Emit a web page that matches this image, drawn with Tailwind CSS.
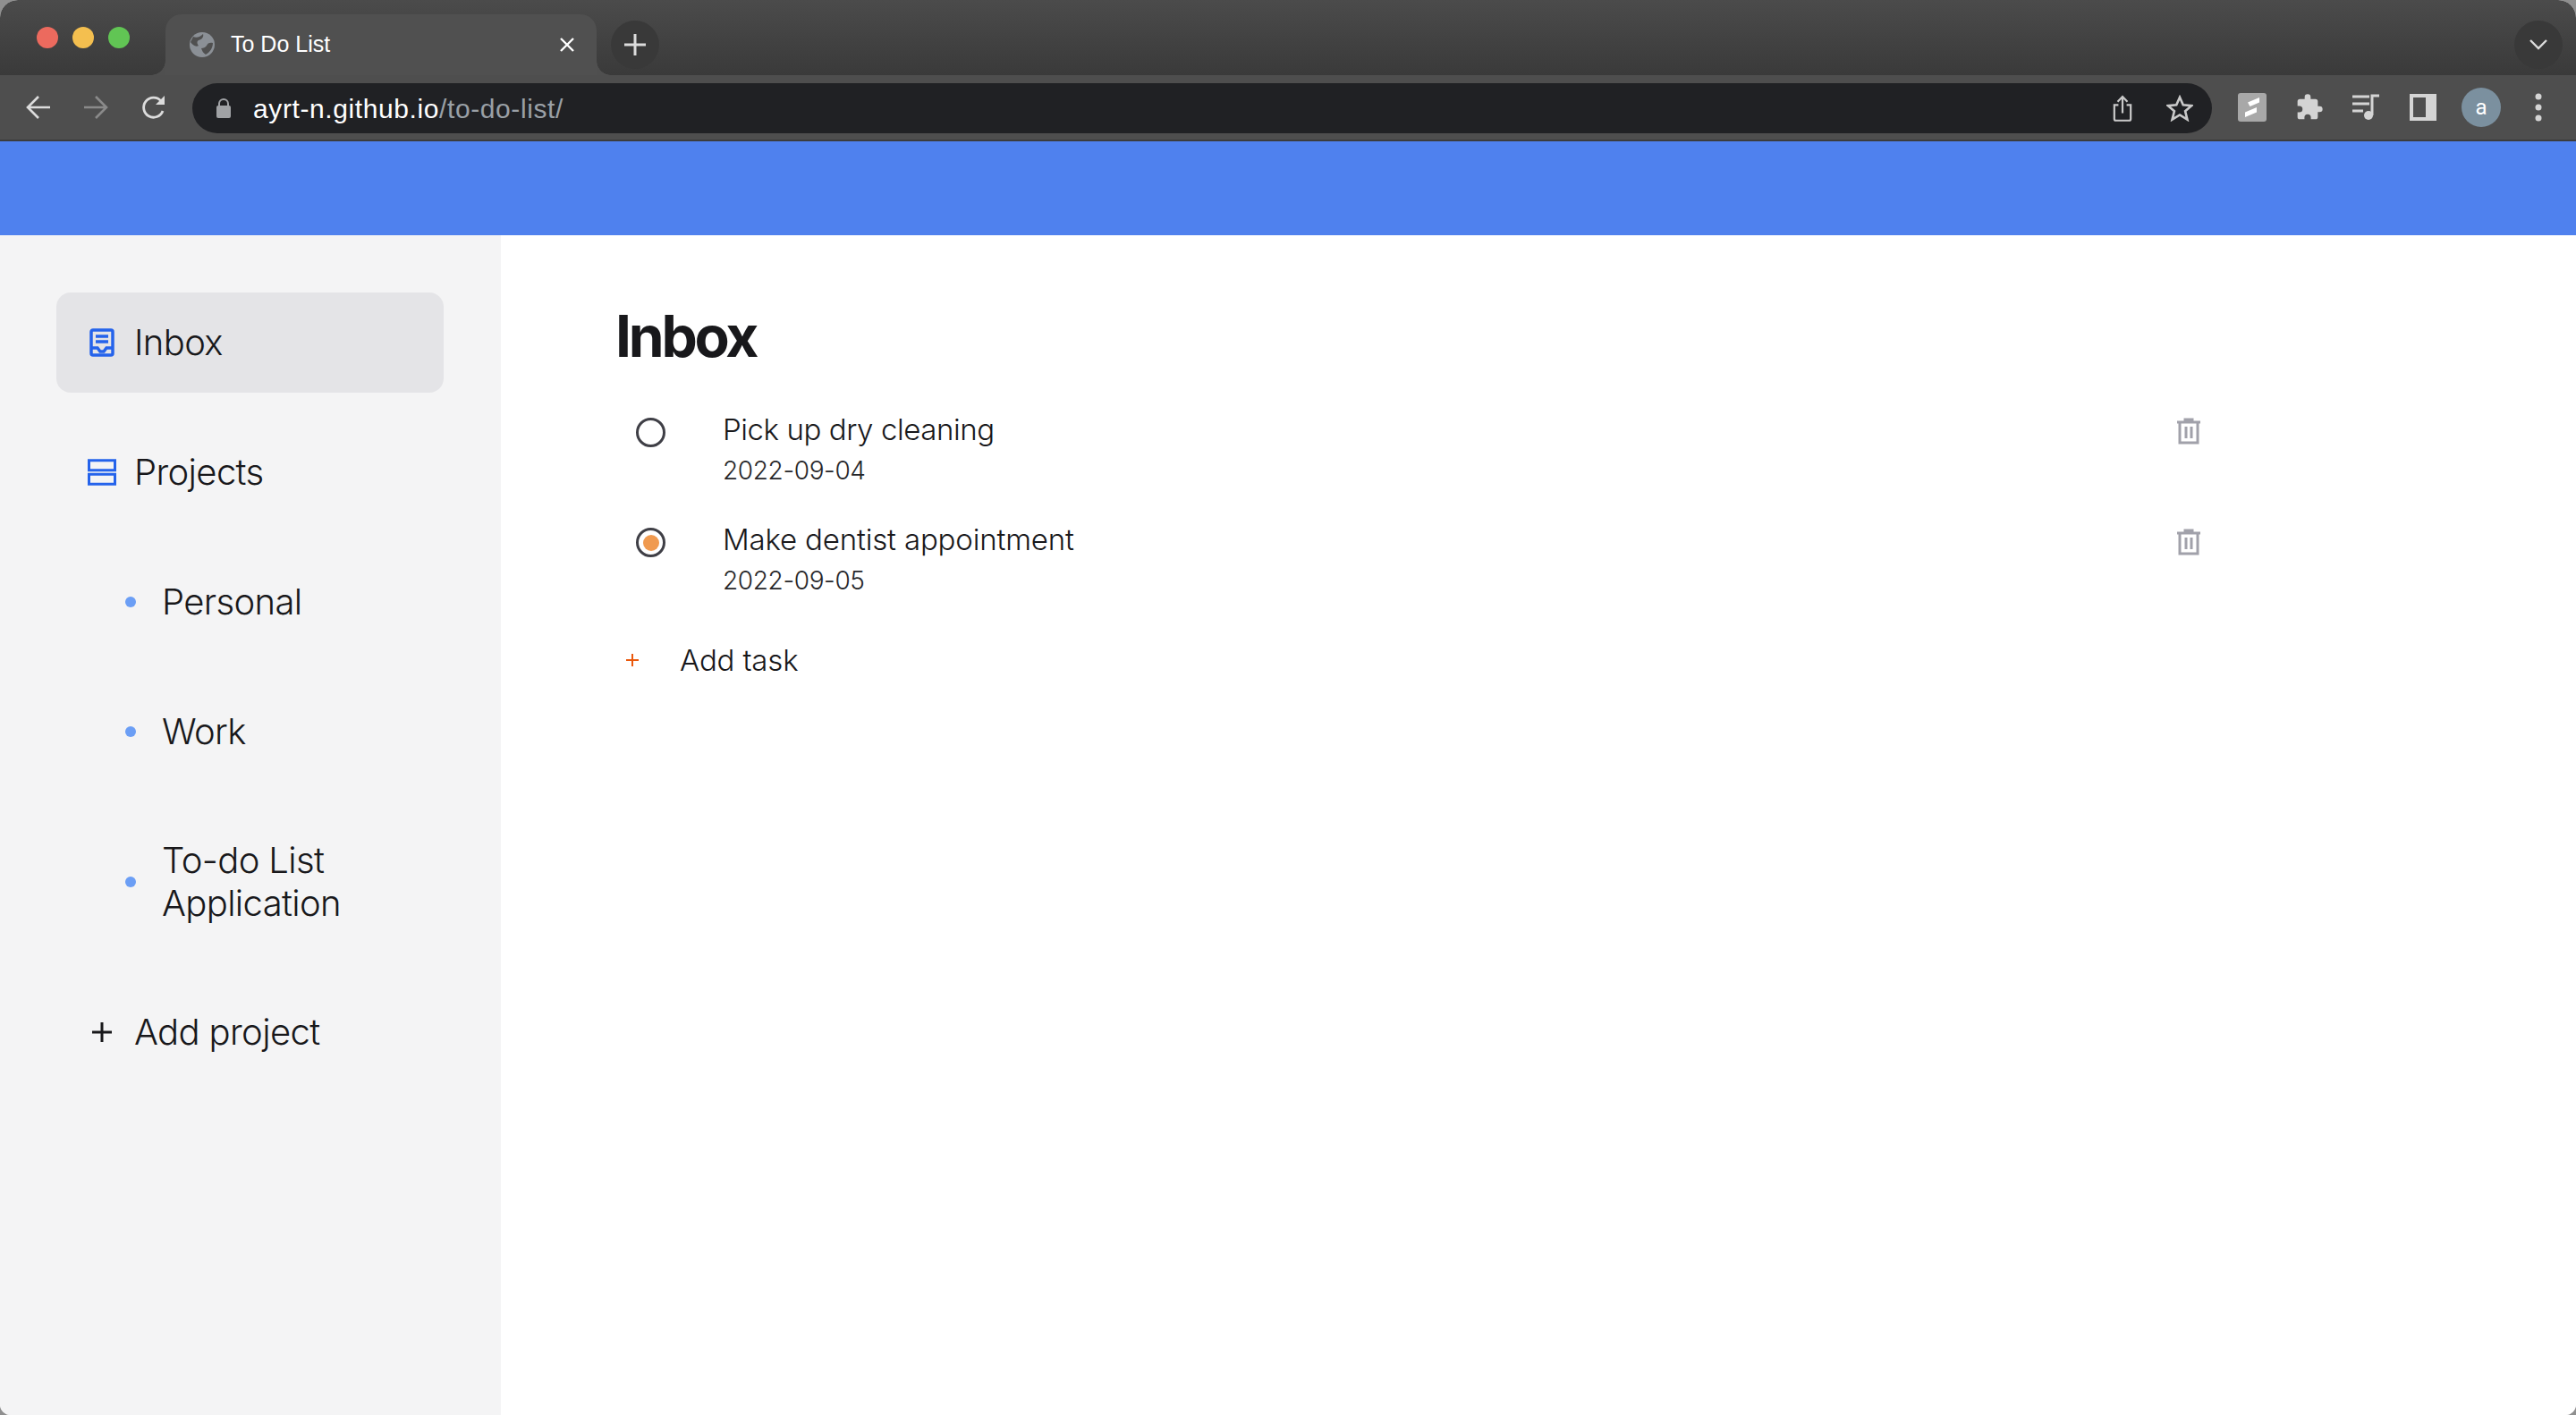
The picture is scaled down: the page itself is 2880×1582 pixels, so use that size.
<!DOCTYPE html>
<html lang="en">
  <head>
    <title>To Do List</title>
    <script src="https://cdn.jsdelivr.net/npm/@tailwindcss/browser@4"></script>
  </head>

  <body class="bg-[#8f8f8f]">
    <div class="h-[1582px] w-[2880px] overflow-hidden flex flex-col font-['Inter',sans-serif] rounded-t-[20px] rounded-b-[12px] bg-white">
      <!-- Tab strip -->
      <div class="h-[84px] shrink-0 flex bg-gradient-to-b from-[#4b4b4b] to-[#3a3a3a] font-['Liberation_Sans',sans-serif]">
        <div class="w-[185px] shrink-0 flex items-start pt-[30px] pl-[41px] gap-[16px]">
          <span class="size-[24px] rounded-full bg-[#ec6a5e]"></span>
          <span class="size-[24px] rounded-full bg-[#f4bf4f]"></span>
          <span class="size-[24px] rounded-full bg-[#61c554]"></span>
        </div>
        <div class="relative mt-[16px] h-[68px] w-[482px] shrink-0 rounded-t-[18px] bg-[#505050] flex items-center pl-[26px] pr-[24px]">
          <!-- concave corners where the tab meets the toolbar -->
          <span class="absolute bottom-0 -left-[16px] size-[16px] bg-[radial-gradient(circle_at_0_0,transparent_15.500px,#4f4f4f_16px)]"></span>
          <span class="absolute bottom-0 -right-[16px] size-[16px] bg-[radial-gradient(circle_at_100%_0,transparent_15.500px,#4f4f4f_16px)]"></span>
          <svg class="size-[30px] shrink-0" viewBox="0 0 30 30">
            <circle cx="15" cy="15" r="14" fill="#8b9096" />
            <path d="M5 6c4 2 8 0 11-3 1 3-1 6-5 7-2 1-2 4 0 6-3 2-7-1-9-4zM27 13c-3-1-6 0-7 3-1 2-4 3-6 3 1 3 2 5 5 7 4-2 8-7 8-13z" fill="#505050" />
          </svg>
          <span class="ml-[17px] text-[25px] text-white flex-1">To Do List</span>
          <svg class="size-[18px]" viewBox="0 0 18 18" fill="none" stroke="#fff" stroke-width="2.4"><path d="M2 2l14 14M16 2L2 16" /></svg>
        </div>
        <div class="ml-[16px] mt-[23px] size-[54px] rounded-full bg-[#393939] flex items-center justify-center">
          <svg class="size-[26px]" viewBox="0 0 26 26" fill="none" stroke="#dcdcdc" stroke-width="3"><path d="M13 1v24M1 13h24" /></svg>
        </div>
        <div class="flex-1"></div>
        <div class="mr-[15px] mt-[23px] size-[54px] rounded-full bg-[#393939] flex items-center justify-center">
          <svg class="w-[20px] h-[12px]" viewBox="0 0 20 12" fill="none" stroke="#dcdcdc" stroke-width="2.4"><path d="M1 1l9 9 9-9" /></svg>
        </div>
      </div>

      <!-- Toolbar -->
      <div class="h-[74px] shrink-0 bg-[#4e4e4e] border-b-2 border-[#3c3c3c] flex items-center font-['Liberation_Sans',sans-serif]">
        <div class="w-[215px] shrink-0 flex items-center pl-[29px] gap-[36px]">
          <svg class="size-[28px]" viewBox="0 0 28 28" fill="none" stroke="#dcdcdc" stroke-width="2.6"><path d="M27 14H3M14 2L2 14l12 12" /></svg>
          <svg class="size-[28px]" viewBox="0 0 28 28" fill="none" stroke="#8a8a8a" stroke-width="2.6"><path d="M1 14h24M14 2l12 12-12 12" /></svg>
          <svg class="size-[30px]" viewBox="0 0 30 30" fill="none" stroke="#dcdcdc" stroke-width="2.8"><path d="M25 19a11 11 0 1 1-2-11" /><path d="M27 2v10H17z" fill="#dcdcdc" stroke="none" /></svg>
        </div>
        <div class="h-[56px] w-[2258px] shrink-0 rounded-full bg-[#202124] flex items-center pl-[26px] pr-[21px] mt-[2px]">
          <svg class="w-[18px] h-[24px] shrink-0" viewBox="0 0 18 24"><path d="M4 10V7a5 5 0 0 1 10 0v3" fill="none" stroke="#a0a2a5" stroke-width="2" /><rect x="1" y="9" width="16" height="14" rx="2" fill="#a0a2a5" /></svg>
          <span class="ml-[24px] text-[30px] tracking-[0.6px] text-white flex-1">ayrt-n.github.io<span class="text-[#9aa0a6]">/to-do-list/</span></span>
          <svg class="w-[22px] h-[30px] mr-[38px]" viewBox="0 0 24 32" fill="none" stroke="#c9c9c9" stroke-width="2.4"><path d="M7 12H2v17a2 2 0 0 0 2 2h16a2 2 0 0 0 2-2V12h-5M12 22V2M6 8l6-6 6 6" /></svg>
          <svg class="size-[30px]" viewBox="0 0 32 32" fill="none" stroke="#c9c9c9" stroke-width="2.8"><path d="M16 3l4 9 10 1-7.500 6.500 2.500 10L16 24l-9 5.500 2.500-10L2 13l10-1z" /></svg>
        </div>
        <div class="flex items-center pl-[29px] gap-[32px]">
          <div class="size-[32px] rounded-[3px] bg-[#a8a8a8] flex items-center justify-center">
            <svg class="size-[24px]" viewBox="0 0 24 24" fill="#fff"><path d="M7 6.500L20 1v5.500L9.500 11zM4 17.500L17 12v5.500L4 23z" /></svg>
          </div>
          <svg class="size-[32px]" viewBox="0 0 24 24" fill="#d4d4d4"><path d="M20.500 11H19V7a2 2 0 0 0-2-2h-4V3.500a2.500 2.500 0 0 0-5 0V5H4a2 2 0 0 0-2 2v3.800h1.500a2.700 2.700 0 0 1 0 5.400H2V20a2 2 0 0 0 2 2h3.800v-1.500a2.700 2.700 0 0 1 5.400 0V22H17a2 2 0 0 0 2-2v-4h1.500a2.500 2.500 0 0 0 0-5z" /></svg>
          <svg class="size-[32px]" viewBox="0 0 32 32" fill="none" stroke="#d4d4d4" stroke-width="3"><path d="M0 4h19M0 12h19M0 20h12" /><path d="M22 25V3h8" /><circle cx="18" cy="25" r="5" fill="#d4d4d4" stroke="none" /></svg>
          <div class="size-[30px] bg-[#d4d4d4] flex">
            <div class="ml-[4px] my-[4px] w-[14px] bg-[#4e4e4e]"></div>
          </div>
          <div class="-ml-[4px] size-[44px] rounded-full bg-[#7b909f] flex items-center justify-center text-white text-[24px] font-['Roboto',sans-serif]">a</div>
          <svg class="w-[10px] h-[32px] ml-[5px]" viewBox="0 0 10 32" fill="#d4d4d4"><circle cx="5" cy="4" r="3.500" /><circle cx="5" cy="16" r="3.500" /><circle cx="5" cy="28" r="3.500" /></svg>
        </div>
      </div>

      <!-- Page header -->
      <div class="h-[105px] shrink-0 bg-[#4f81ee]"></div>

      <div class="flex flex-1 min-h-0">
        <!-- Sidebar -->
        <aside class="w-[560px] shrink-0 bg-[#f4f4f5] pl-[63px] pr-[64px] pt-[64px] flex flex-col gap-[33px] text-[40px] leading-[48px] tracking-[-0.016em] font-light text-[#18181b]">
          <div class="h-[112px] rounded-[16px] bg-[#e4e4e7] flex items-center px-[35px] gap-[20px]">
            <svg class="size-[32px] shrink-0" viewBox="0 0 32 32" fill="none" stroke="#2563eb" stroke-width="3.500"><rect x="4" y="2" width="24" height="28" rx="2" /><path d="M9 9h14M9 15h14M4 22h7l3 4h4l3-4h7" /></svg>
            <span>Inbox</span>
          </div>
          <div class="h-[112px] flex items-center px-[35px] gap-[20px]">
            <svg class="size-[32px] shrink-0" viewBox="0 0 32 32" fill="none" stroke="#2563eb" stroke-width="3"><rect x="1.500" y="2.750" width="29" height="11" /><rect x="1.500" y="18.250" width="29" height="11" /></svg>
            <span>Projects</span>
          </div>
          <div class="h-[112px] flex items-center pl-[77px] gap-[29px]">
            <span class="size-[12px] rounded-full bg-[#6b9ef5] shrink-0"></span>
            <span>Personal</span>
          </div>
          <div class="h-[112px] flex items-center pl-[77px] gap-[29px]">
            <span class="size-[12px] rounded-full bg-[#6b9ef5] shrink-0"></span>
            <span>Work</span>
          </div>
          <div class="flex items-center py-[31px] pl-[77px] gap-[29px]">
            <span class="size-[12px] rounded-full bg-[#6b9ef5] shrink-0"></span>
            <span>To-do List Application</span>
          </div>
          <div class="h-[112px] flex items-center px-[35px] gap-[20px]">
            <svg class="size-[32px] shrink-0" viewBox="0 0 32 32" fill="none" stroke="#18181b" stroke-width="3"><path d="M16 5v22M5 16h22" /></svg>
            <span>Add project</span>
          </div>
        </aside>

        <!-- Main -->
        <main class="flex-1 bg-white pl-[129px] pt-[73px] text-[#18181b]">
          <h1 class="-ml-[1px] text-[64px] leading-[80px] font-bold tracking-[-0.05em]">Inbox</h1>
          <div class="w-[1800px] mt-[42px] flex flex-col gap-[32px]">
            <div class="h-[91px] flex items-start">
              <span class="mt-[9px] ml-[22px] size-[33px] rounded-full border-[3px] border-[#3f3f46] shrink-0"></span>
              <div class="ml-[64px] flex-1 font-light">
                <div class="text-[33px] leading-[44px] tracking-[-0.013em]">Pick up dry cleaning</div>
                <div class="text-[28px] leading-[36px] mt-[6px] tracking-[-0.013em] text-[#27272a]">2022-09-04</div>
              </div>
              <svg class="size-[32px] mt-[8px] mr-[26px] shrink-0" viewBox="0 0 32 32" fill="none" stroke="#a1a1aa" stroke-width="3"><path d="M3 6h26M12 6V3h8v3M6 6v23h20V6M13 11v13M19 11v13" /></svg>
            </div>
            <div class="h-[91px] flex items-start">
              <span class="mt-[9px] ml-[22px] size-[33px] rounded-full border-[3px] border-[#3f3f46] shrink-0 flex items-center justify-center">
                <span class="size-[18px] rounded-full bg-[#f09a4f]"></span>
              </span>
              <div class="ml-[64px] flex-1 font-light">
                <div class="text-[33px] leading-[44px] tracking-[-0.005em]">Make dentist appointment</div>
                <div class="text-[28px] leading-[36px] mt-[6px] tracking-[-0.013em] text-[#27272a]">2022-09-05</div>
              </div>
              <svg class="size-[32px] mt-[9px] mr-[26px] shrink-0" viewBox="0 0 32 32" fill="none" stroke="#a1a1aa" stroke-width="3"><path d="M3 6h26M12 6V3h8v3M6 6v23h20V6M13 11v13M19 11v13" /></svg>
            </div>
          </div>
          <div class="mt-[44px] flex items-center font-light">
            <svg class="size-[16px] ml-[10px] shrink-0" viewBox="0 0 16 16" fill="none" stroke="#ea580c" stroke-width="2"><path d="M8 1v14M1 8h14" /></svg>
            <span class="ml-[45px] text-[33px] leading-[44px] tracking-[-0.005em]">Add task</span>
          </div>
        </main>
      </div>
    </div>
  </body>
</html>
